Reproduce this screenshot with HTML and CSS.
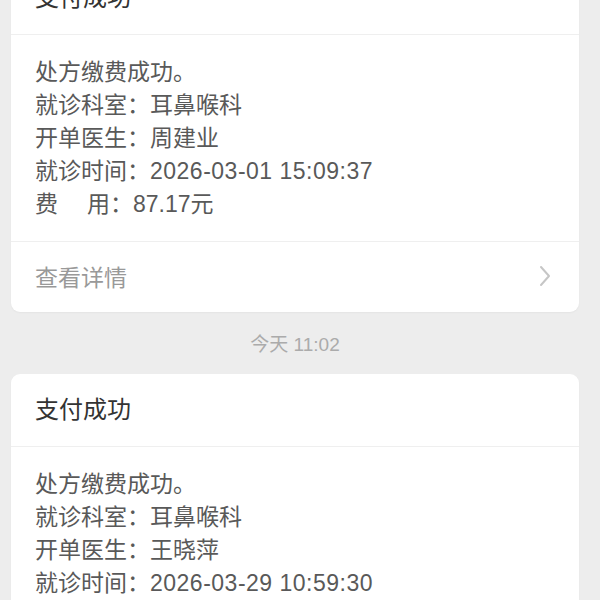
FILE: index.html
```html
<!DOCTYPE html>
<html lang="zh-CN">
<head>
<meta charset="utf-8">
<link rel="stylesheet" href="styles.css">
</head>
<body>
<div class="page">
  <div class="card first">
    <div class="card-title">支付成功</div>
    <div class="card-body">
      <div class="line">处方缴费成功。</div>
      <div class="line">就诊科室：耳鼻喉科</div>
      <div class="line">开单医生：周建业</div>
      <div class="line">就诊时间：<span class="num">2026-03-01 15:09:37</span></div>
      <div class="line">费<span class="sp"></span>用：87.17元</div>
    </div>
    <div class="card-foot">
      <span>查看详情</span>
      <svg class="chev" width="12" height="22" viewBox="0 0 12 22"><polyline points="2,2 10,11 2,20" fill="none" stroke="#c6c6c6" stroke-width="2" stroke-linecap="round" stroke-linejoin="round"/></svg>
    </div>
  </div>
  <div class="stamp">今天 11:02</div>
  <div class="card">
    <div class="card-title">支付成功</div>
    <div class="card-body">
      <div class="line">处方缴费成功。</div>
      <div class="line">就诊科室：耳鼻喉科</div>
      <div class="line">开单医生：王晓萍</div>
      <div class="line">就诊时间：<span class="num">2026-03-29 10:59:30</span></div>
    </div>
  </div>
</div>
</body>
</html>
```
FILE: styles.css
```css
html, body {
  margin: 0;
  padding: 0;
  background: #ededed;
  height: 600px;
  overflow: hidden;
}
body {
  font-family: "Liberation Sans", "Noto Sans CJK SC", sans-serif;
}
.page {
  padding: 0 21px 0 11px;
}
.card {
  background: #fff;
  border-radius: 9px;
  box-shadow: 0 1px 2px rgba(0,0,0,0.04);
}
.card.first {
  margin-top: -38px;
}
.card-title {
  height: 72px;
  line-height: 72px;
  padding-left: 24px;
  font-size: 24px;
  color: #333;
  border-bottom: 1px solid #efefef;
}
.card-body {
  padding: 21px 24px 20px;
  font-size: 23px;
  line-height: 33px;
  color: #595959;
}
.num {
  letter-spacing: 0.5px;
}
.sp {
  display: inline-block;
  width: 29px;
}
.card-foot {
  box-sizing: border-box;
  height: 71px;
  border-top: 1px solid #efefef;
  display: flex;
  align-items: center;
  justify-content: space-between;
  padding: 0 28px 3px 24px;
  font-size: 23px;
  color: #999;
}
.chev {
  display: block;
}
.stamp {
  text-align: center;
  font-size: 19px;
  line-height: 22px;
  padding: 22px 0 18px;
  color: #ababab;
}
```
